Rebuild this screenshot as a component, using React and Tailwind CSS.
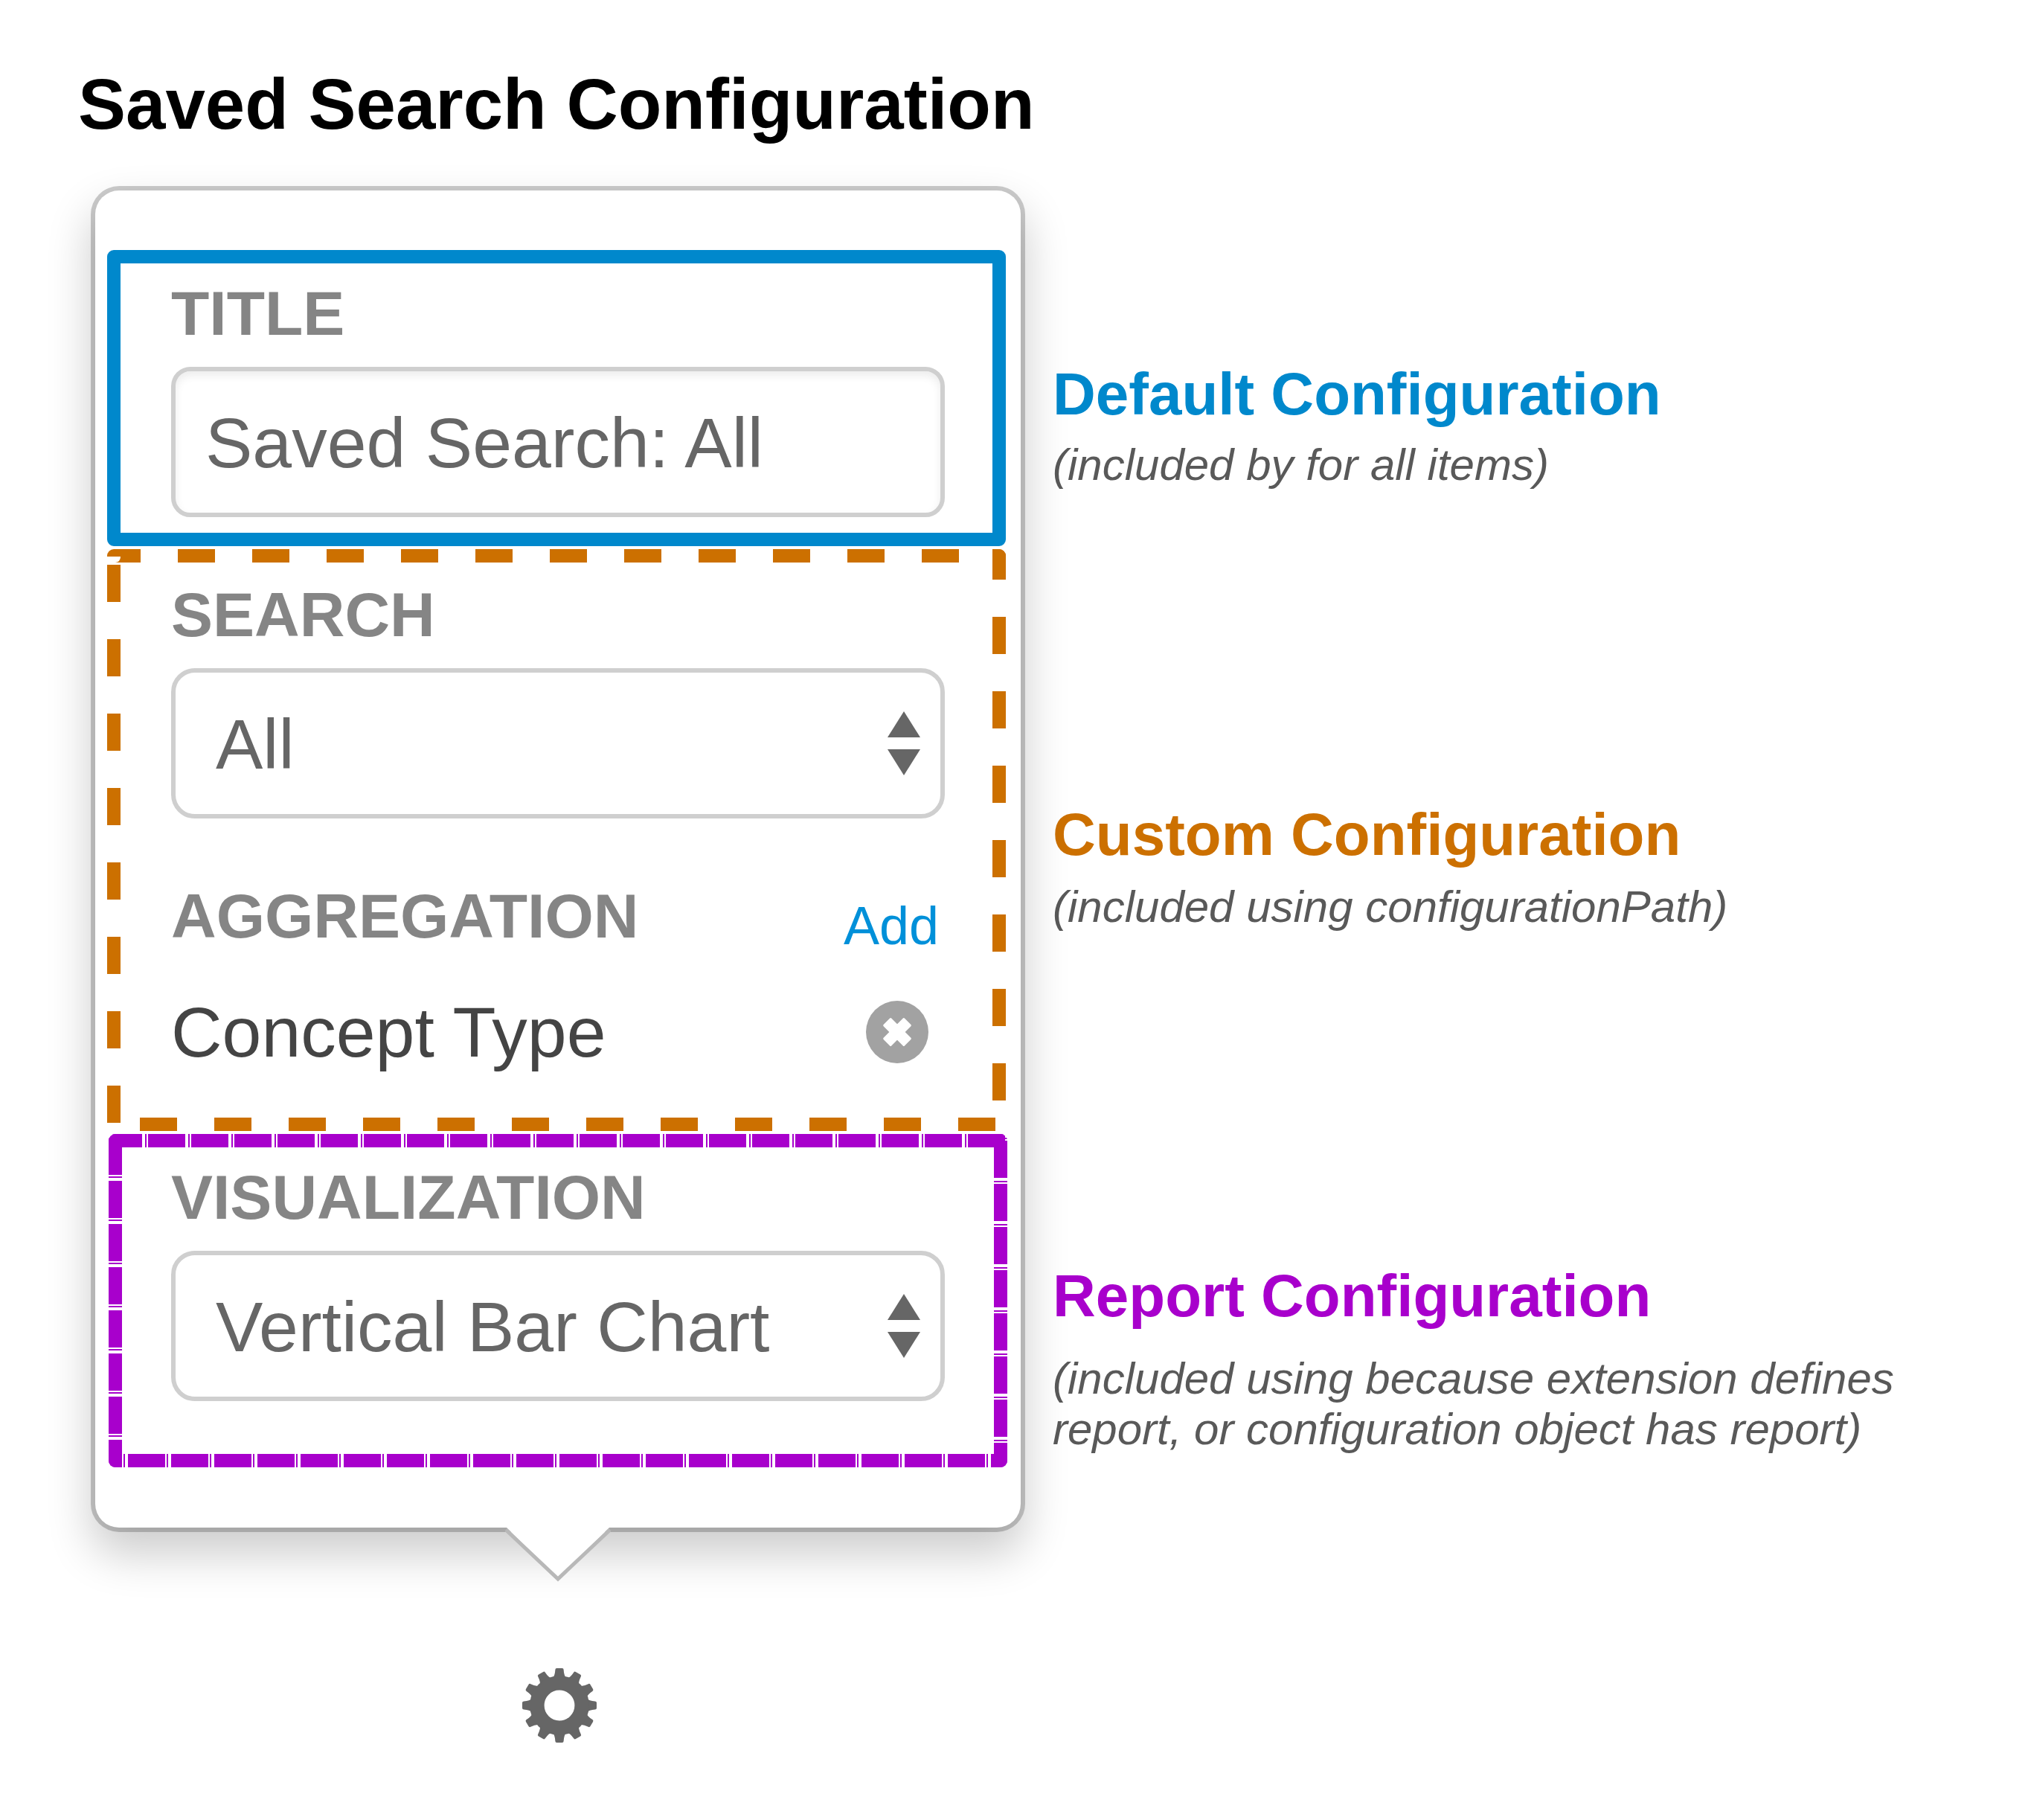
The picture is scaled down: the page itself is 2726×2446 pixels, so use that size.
import { useState } from "react";

function FieldLabel({ htmlFor, children }) {
  return (
    <label htmlFor={htmlFor} className="block text-[84px] leading-[84px] font-bold text-[#858585]">
      {children}
    </label>
  );
}

function SelectField({ id, value, options }) {
  const [current, setCurrent] = useState(value);
  return (
    <div className="relative mt-[30px]">
      <select
        id={id}
        value={current}
        onChange={(e) => setCurrent(e.target.value)}
        className="block h-[202px] w-full appearance-none rounded-[32px] border-6 border-[#cfcfcf] bg-white pt-0.5 pl-[54px] pr-32 text-[95px] leading-[112px] text-[#666]"
      >
        {options.map((option) => (
          <option key={option}>{option}</option>
        ))}
      </select>
      <svg
        viewBox="0 0 44 86"
        className="pointer-events-none absolute top-[58px] right-[33px] h-[86px] w-11 fill-[#666]"
        aria-hidden="true"
      >
        <path d="M22 0 44 35H0Z" />
        <path d="M22 86 44 51H0Z" />
      </svg>
    </div>
  );
}

/* Each line lies on an edge, so half of its 36px stroke is clipped and 18px stay visible. */
function CustomOutline() {
  return (
    <svg
      className="pointer-events-none absolute inset-0 h-full w-full overflow-hidden rounded-[9px] stroke-[#cc7000]"
      strokeWidth="36"
      strokeDasharray="50 50"
      aria-hidden="true"
    >
      <line x1="0" y1="0" x2="0" y2="100%" strokeDashoffset="79" />
      <line x1="0" y1="0" x2="100%" y2="0" strokeDashoffset="5" />
      <line x1="100%" y1="0" x2="100%" y2="100%" strokeDashoffset="9" />
      <line x1="0" y1="100%" x2="100%" y2="100%" strokeDashoffset="56" />
      <path d="M0 10H18Q18 17 11 18H0Z" fill="#fff" stroke="none" />
    </svg>
  );
}

function ReportOutline() {
  return (
    <svg
      className="pointer-events-none absolute inset-0 h-full w-full overflow-hidden rounded-[9px] stroke-[#a800cc]"
      strokeWidth="36"
      strokeDasharray="50 4 2 2"
      aria-hidden="true"
    >
      <line x1="0" y1="0" x2="100%" y2="0" strokeDashoffset="5" />
      <line x1="100%" y1="0" x2="100%" y2="100%" strokeDashoffset="49" />
      <line x1="100%" y1="100%" x2="0" y2="100%" strokeDashoffset="28" />
      <line x1="0" y1="100%" x2="0" y2="0" strokeDashoffset="13" />
    </svg>
  );
}

function RemoveIcon() {
  return (
    <svg viewBox="-42 -42 84 84" className="h-[84px] w-[84px]" aria-hidden="true">
      <circle r="42" fill="#a2a2a2" />
      <g fill="#fff">
        <rect x="-20" y="-7.5" width="40" height="15" rx="1.5" transform="rotate(45)" />
        <rect x="-20" y="-7.5" width="40" height="15" rx="1.5" transform="rotate(-45)" />
      </g>
    </svg>
  );
}

const TEETH = [0, 30, 60, 90, 120, 150, 180, 210, 240, 270, 300, 330];

function GearIcon() {
  return (
    <svg viewBox="-50 -50 100 100" className="h-[102px] w-[102px]" aria-hidden="true">
      <g fill="#666">
        {TEETH.map((angle) => (
          <path
            key={angle}
            d="M-9 -36Q-6 -39 -5.5 -47Q-5.5 -49 -3.5 -49H3.5Q5.5 -49 5.5 -47Q6 -39 9 -36Z"
            transform={`rotate(${angle})`}
          />
        ))}
      </g>
      <circle r="29.5" fill="none" stroke="#666" strokeWidth="19" />
    </svg>
  );
}

function Annotation({ title, color, gap, children }) {
  return (
    <section>
      <h2 className={`text-[80px] leading-[80px] font-bold ${color}`}>{title}</h2>
      <p className={`text-[60px] leading-[68px] text-[#595959] italic ${gap}`}>{children}</p>
    </section>
  );
}

export default function App() {
  const [title, setTitle] = useState("Saved Search: All");
  return (
    <main className="min-h-screen bg-white pt-[92px] font-['Liberation_Sans',Arial,sans-serif]">
      <h1 className="pl-[105px] text-[96px] leading-[96px] font-bold text-black">
        Saved Search Configuration
      </h1>

      <div className="mt-[68px] grid grid-cols-[1244fr_1311fr] items-start gap-x-[43px] pl-32">
        <div>
          <form className="relative flex flex-col gap-1 rounded-[32px] bg-white pt-20 pb-[81px] shadow-[0_0_0_6px_rgba(0,0,0,0.2),0_30px_60px_6px_rgba(0,0,0,0.2)]">
            <section className="mr-5 ml-4 rounded-[9px] border-18 border-[#0088cc] pt-[25px] pr-16 pb-[21px] pl-[68px]">
              <FieldLabel htmlFor="title">TITLE</FieldLabel>
              <input
                id="title"
                type="text"
                value={title}
                onChange={(e) => setTitle(e.target.value)}
                className="mt-[30px] block h-[202px] w-full rounded-[26px] border-6 border-[#cfcfcf] bg-white px-10 pt-0.5 text-[95px] leading-[112px] text-[#666] shadow-[inset_0_6px_12px_rgba(0,0,0,0.075)]"
              />
            </section>

            <section className="relative mr-5 ml-4 pt-[46px] pr-[82px] pb-[82px] pl-[86px]">
              <CustomOutline />
              <FieldLabel htmlFor="search">SEARCH</FieldLabel>
              <SelectField id="search" value="All" options={["All"]} />
              <div className="mt-[89px] flex h-[91px] justify-between">
                <h3 className="text-[84px] leading-[84px] font-bold text-[#858585]">AGGREGATION</h3>
                <a href="#add" className="mr-2 self-end text-[72px] leading-[72px] text-[#0090d9]">
                  Add
                </a>
              </div>
              <div className="mt-14 flex h-[102px] items-center justify-between">
                <span className="text-[95px] leading-[96px] text-[#444]">Concept Type</span>
                <button type="button" aria-label="Remove Concept Type" className="mr-[22px]">
                  <RemoveIcon />
                </button>
              </div>
            </section>

            <section className="relative mx-[18px] px-[84px] pt-[43px] pb-[89px]">
              <ReportOutline />
              <FieldLabel htmlFor="visualization">VISUALIZATION</FieldLabel>
              <SelectField
                id="visualization"
                value="Vertical Bar Chart"
                options={["Vertical Bar Chart"]}
              />
            </section>

            <svg
              viewBox="0 0 142 76"
              className="absolute top-full left-1/2 h-[76px] w-[142px] -translate-x-1/2"
              aria-hidden="true"
            >
              <path d="M2 0 71 68 140 0Z" fill="#fff" />
              <path d="M1 3 71 69 141 3" fill="none" stroke="#b8b8b8" strokeWidth="5" />
            </svg>
          </form>

          <div className="mt-[188px] flex justify-center pl-1">
            <button type="button" aria-label="Configure">
              <GearIcon />
            </button>
          </div>
        </div>

        <div className="pt-[234px]">
          <Annotation title="Default Configuration" color="text-[#0088cc]" gap="mt-[21px]">
            (included by for all items)
          </Annotation>
          <div className="mt-[423px]">
            <Annotation title="Custom Configuration" color="text-[#cc7000]" gap="mt-[23px]">
              (included using configurationPath)
            </Annotation>
          </div>
          <div className="mt-[449px]">
            <Annotation title="Report Configuration" color="text-[#a800cc]" gap="mt-[37px]">
              (included using because extension defines
              <br />
              report, or configuration object has report)
            </Annotation>
          </div>
        </div>
      </div>
    </main>
  );
}
